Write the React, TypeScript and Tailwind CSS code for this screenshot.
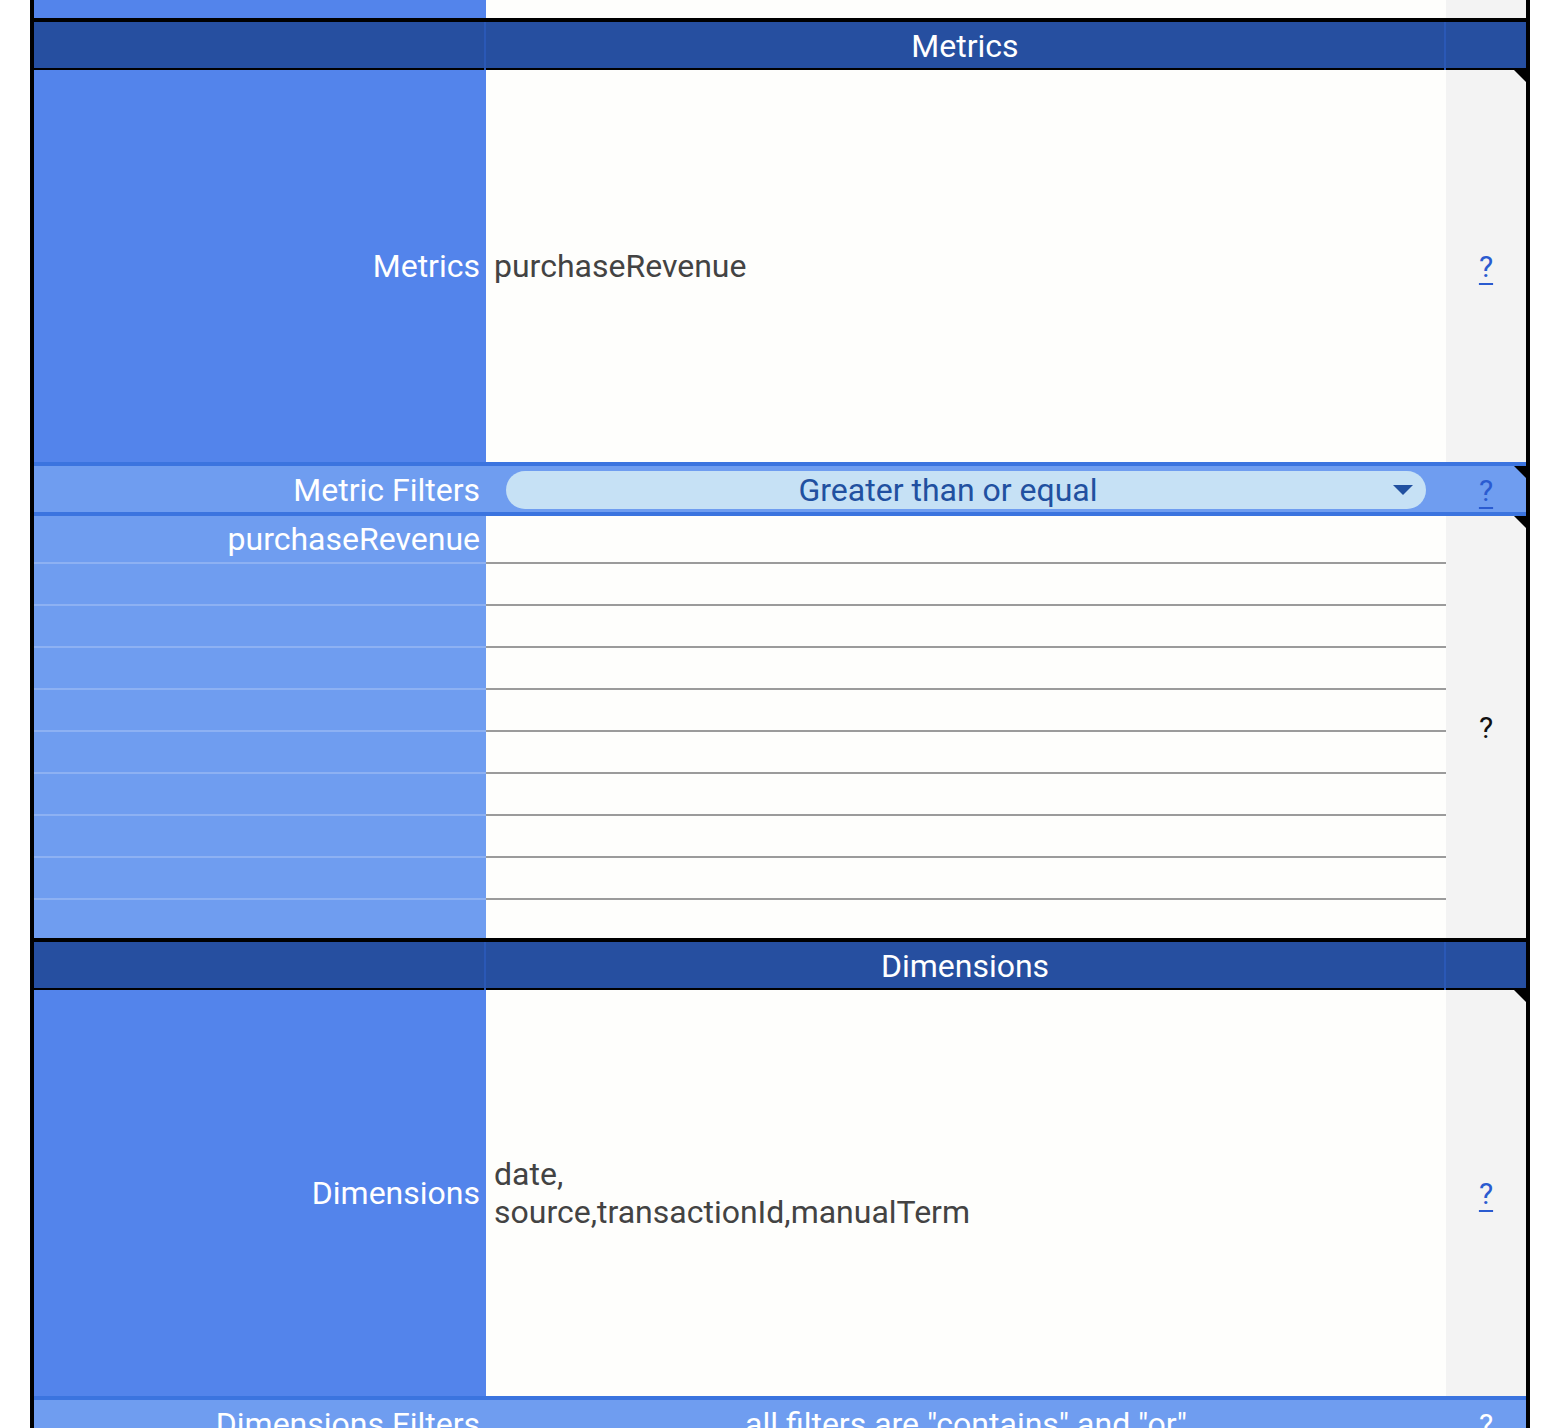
import React from 'react';

// Sheet-like config panel: label column / value column / help column
const GRID = 'grid grid-cols-[452px_960px_80px]';

function Note() {
    return (
        <span className="absolute right-0 top-0 h-0 w-0 border-l-[12px] border-t-[12px] border-l-transparent border-t-black" />
    );
}

function Help({ color = 'blue' }: { color?: 'blue' | 'white' | 'black' }) {
    if (color === 'black') return <span className="text-[#111111] text-[30px]">?</span>;
    return (
        <span
            className={
                color === 'blue'
                    ? 'text-[#2a5bd0] text-[30px] underline decoration-2 underline-offset-[6px]'
                    : 'text-white text-[30px] underline decoration-2 underline-offset-[6px]'
            }
        >
            ?
        </span>
    );
}

function SectionHeader({ title }: { title: string }) {
    return (
        <div className={`${GRID} h-[46px] bg-[#264fa0] text-white text-[32px]`}>
            <div className="border-r-2 border-[#2a58b6]" />
            <div className="flex items-center justify-center border-r-2 border-[#2a58b6]">{title}</div>
            <div />
        </div>
    );
}

function BigRow({ label, height, children }: { label: string; height: string; children: React.ReactNode }) {
    return (
        <div className={`${GRID} ${height}`}>
            <div className="flex items-center justify-end bg-[#5384eb] pr-[6px] text-white">{label}</div>
            <div className="flex items-center bg-[#fefefc] pl-[8px] text-[#434343] leading-[38px]">{children}</div>
            <div className="relative flex items-center justify-center bg-[#f3f3f3]">
                <Help />
                <Note />
            </div>
        </div>
    );
}

const FILTER_ROWS = ['purchaseRevenue', '', '', '', '', '', '', '', '', ''];

export default function App() {
    return (
        <div className="h-[1428px] overflow-hidden bg-white font-[family-name:Roboto,'Liberation_Sans',sans-serif] text-[32px]">
            <div className="ml-[30px] w-[1500px] border-x-4 border-black">
                {/* tail of the previous section */}
                <div className={`${GRID} h-[18px]`}>
                    <div className="bg-[#5384eb]" />
                    <div className="bg-[#fefefc]" />
                    <div className="bg-[#f3f3f3]" />
                </div>

                <div className="border-t-4 border-b-2 border-black">
                    <SectionHeader title="Metrics" />
                </div>

                <BigRow label="Metrics" height="h-[392px]">
                    purchaseRevenue
                </BigRow>

                {/* Metric Filters */}
                <div className={`${GRID} h-[54px] border-y-4 border-[#3b74df] bg-[#6f9df0]`}>
                    <div className="flex items-center justify-end pr-[6px] text-white">Metric Filters</div>
                    <div className="flex items-center px-[20px]">
                        <div className="relative flex h-[38px] w-full items-center justify-center rounded-full bg-[#c6e1f5] pr-[36px] text-[#2150a0]">
                            Greater than or equal
                            <span className="absolute right-[13px] top-[14px] h-0 w-0 border-x-[10px] border-t-[10px] border-x-transparent border-t-[#2150a0]" />
                        </div>
                    </div>
                    <div className="relative flex items-center justify-center">
                        <Help />
                        <Note />
                    </div>
                </div>

                {/* filter rows */}
                <div className={`${GRID} h-[422px]`}>
                    <div className="flex flex-col bg-[#6f9df0]">
                        {FILTER_ROWS.map((name, i) => (
                            <div
                                key={i}
                                className={
                                    i === 0
                                        ? 'flex h-[46px] items-center justify-end pr-[6px] text-white'
                                        : i === FILTER_ROWS.length - 1
                                          ? 'h-[40px] border-t-2 border-[#8db1f3]'
                                          : 'h-[42px] border-t-2 border-[#8db1f3]'
                                }
                            >
                                {name}
                            </div>
                        ))}
                    </div>
                    <div className="flex flex-col bg-[#fefefc]">
                        {FILTER_ROWS.map((_, i) => (
                            <div
                                key={i}
                                className={
                                    i === 0
                                        ? 'h-[46px]'
                                        : i === FILTER_ROWS.length - 1
                                          ? 'h-[40px] border-t-2 border-[#9b9b9b]'
                                          : 'h-[42px] border-t-2 border-[#9b9b9b]'
                                }
                            />
                        ))}
                    </div>
                    <div className="relative flex items-center justify-center bg-[#f3f3f3]">
                        <Help color="black" />
                        <Note />
                    </div>
                </div>

                <div className="border-t-4 border-b-2 border-black">
                    <SectionHeader title="Dimensions" />
                </div>

                <BigRow label="Dimensions" height="h-[406px]">
                    <div>
                        date,
                        <br />
                        source,transactionId,manualTerm
                    </div>
                </BigRow>

                {/* Dimensions Filters */}
                <div className={`${GRID} h-[54px] border-y-4 border-[#3b74df] bg-[#6f9df0] text-white`}>
                    <div className="flex items-center justify-end pr-[6px]">Dimensions Filters</div>
                    <div className="flex items-center justify-center">all filters are "contains" and "or"</div>
                    <div className="relative flex items-center justify-center">
                        <Help color="white" />
                    </div>
                </div>
            </div>
        </div>
    );
}
